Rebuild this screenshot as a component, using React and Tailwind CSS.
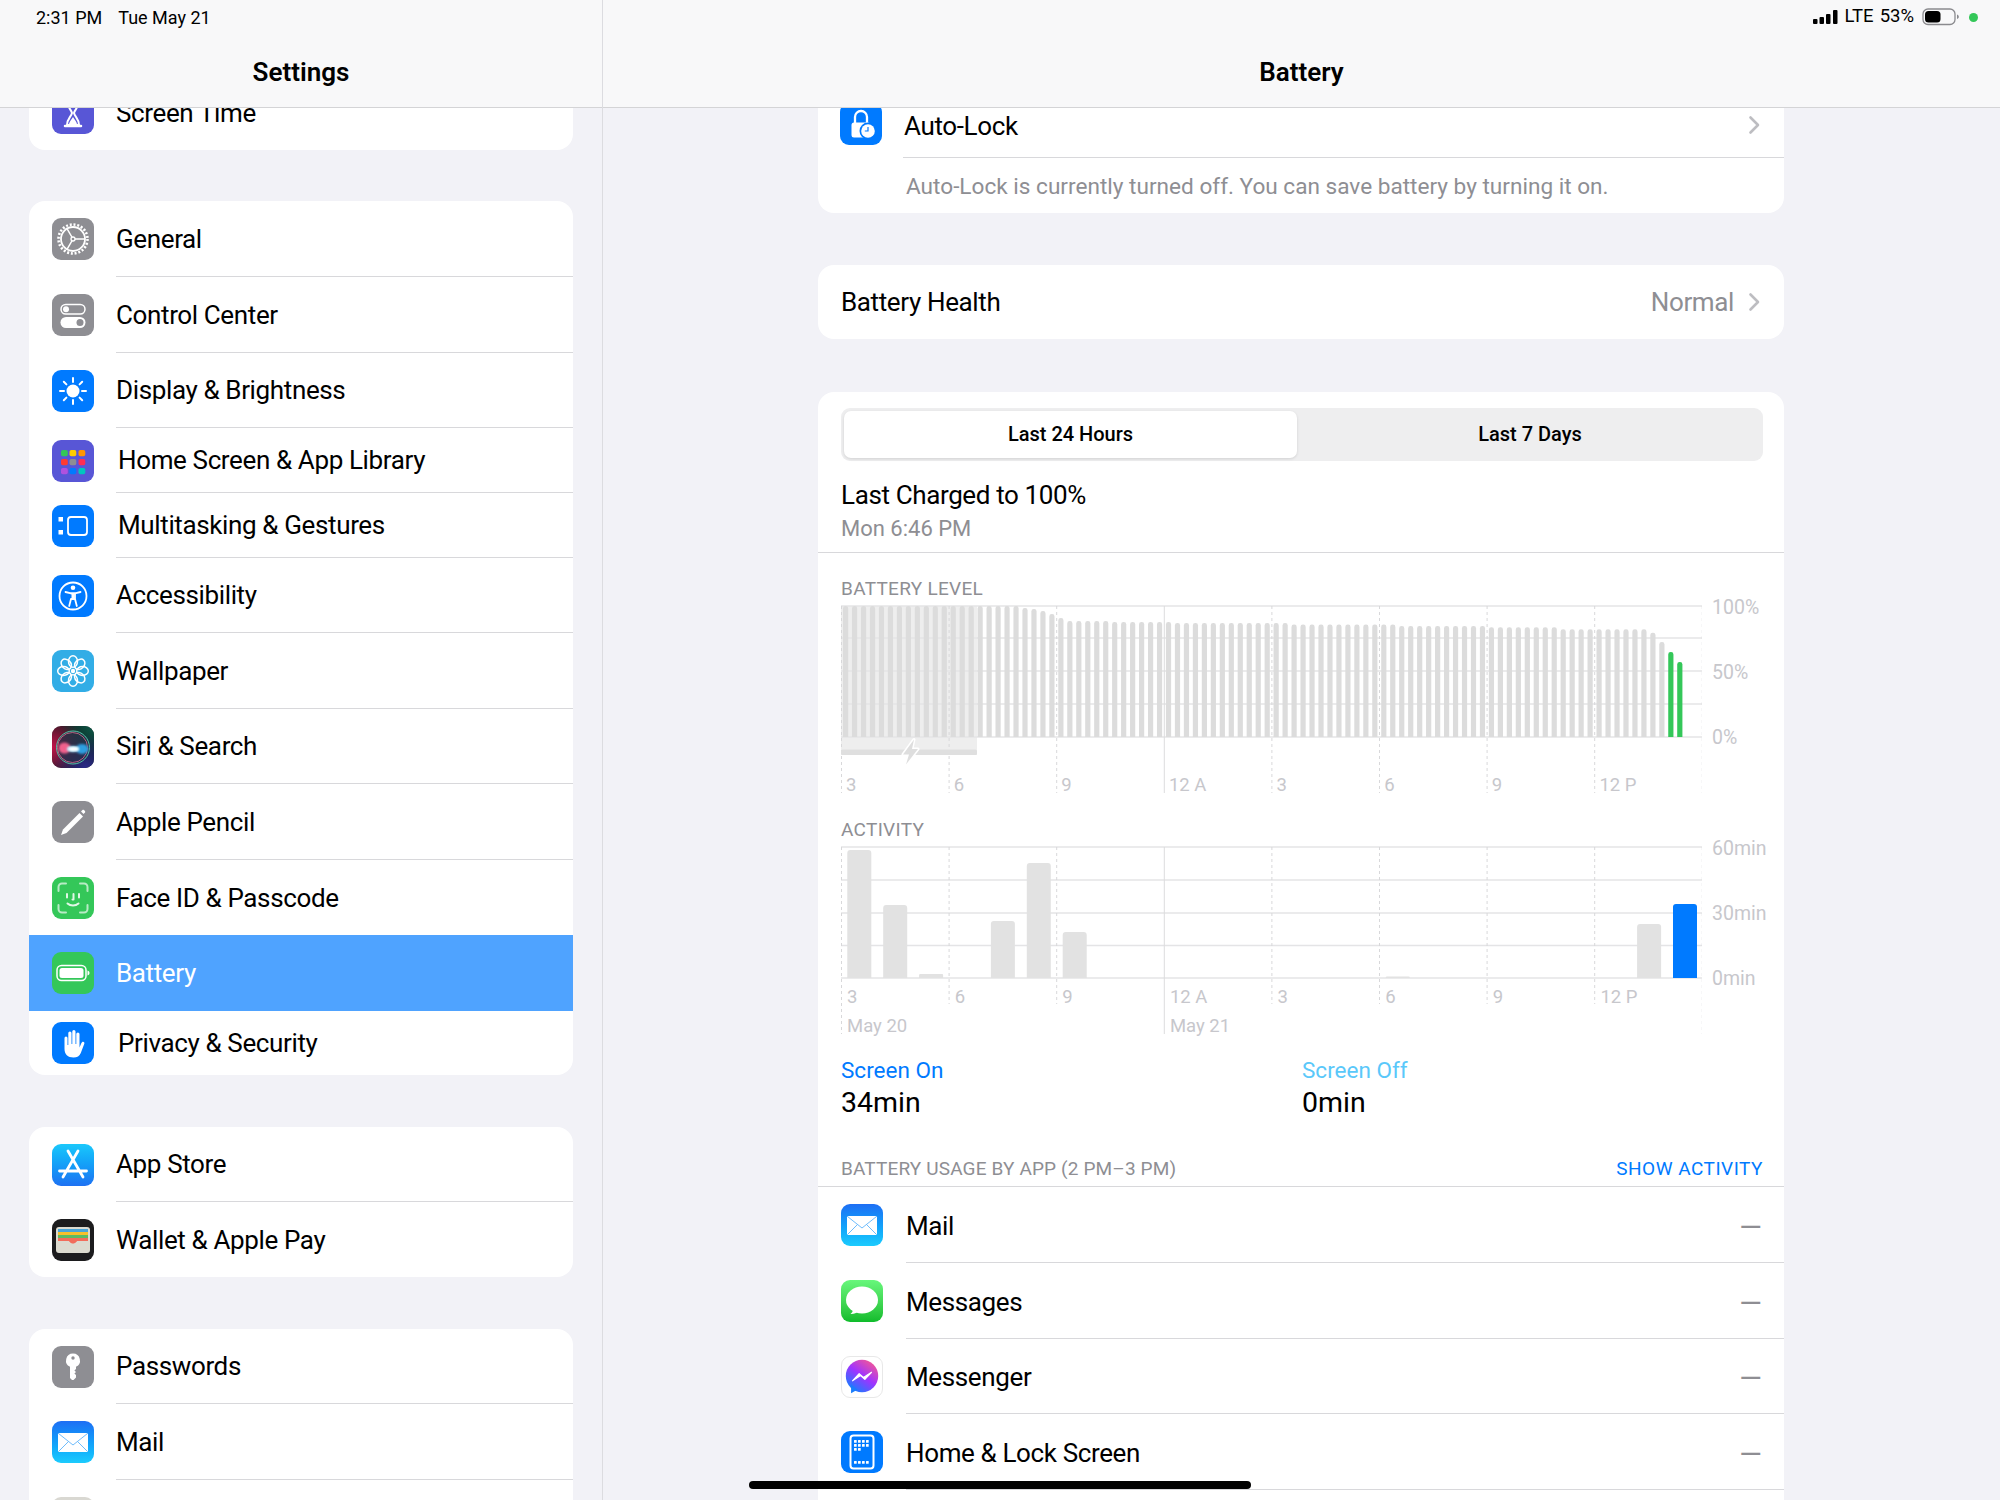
import React from 'react';

const Tile = ({ bg, children }) => (
  <div className={`w-[42px] h-[42px] shrink-0 rounded-[9px] overflow-hidden ${bg}`}>
    <svg viewBox="0 0 42 42" className="w-full h-full block">{children}</svg>
  </div>
);

const Hourglass = () => (
  <Tile bg="bg-[#5856d6]">
    <path d="M13 8h16M13 34h16" stroke="#fff" strokeWidth="2.5" strokeLinecap="round" />
    <path d="M15 9c0 6 4 8 5 12-1 4-5 6-5 12h12c0-6-4-8-5-12 1-4 5-6 5-12z" fill="none" stroke="#fff" strokeWidth="2" />
    <path d="M17 32c.5-3 3-5 4-7 1 2 3.500 4 4 7z" fill="#fff" />
  </Tile>
);

const Gear = () => (
  <Tile bg="bg-[#8e8e93]">
    <circle cx="21" cy="21" r="14.500" fill="none" stroke="#fff" strokeWidth="2.600" strokeDasharray="2 1.800" />
    <circle cx="21" cy="21" r="12" fill="none" stroke="#fff" strokeWidth="1.800" />
    <path d="M21 21H33M21 21L15 10.600M21 21L15 31.400" stroke="#fff" strokeWidth="1.500" />
    <circle cx="21" cy="21" r="2" fill="#8e8e93" stroke="#fff" strokeWidth="1.300" />
  </Tile>
);

const Toggles = () => (
  <Tile bg="bg-[#8e8e93]">
    <rect x="9" y="10.500" width="24" height="9.500" rx="4.750" fill="none" stroke="#fff" strokeWidth="1.500" />
    <circle cx="14" cy="15.250" r="3" fill="#fff" />
    <rect x="8.500" y="23" width="25" height="11" rx="5.500" fill="#fff" />
    <circle cx="28" cy="28.500" r="3.500" fill="#8e8e93" />
  </Tile>
);

const Sun = () => (
  <Tile bg="bg-[#007aff]">
    <circle cx="21" cy="21" r="6.500" fill="#fff" />
    <path
      d="M21 8v4M21 30v4M8 21h4M30 21h4M11.800 11.800l2.600 2.600M27.600 27.600l2.600 2.600M30.200 11.800l-2.600 2.600M14.400 27.600l-2.600 2.600"
      stroke="#fff"
      strokeWidth="2"
      strokeLinecap="round"
    />
  </Tile>
);

const AppGrid = () => {
  const cells = [
    [9, 10, '#34c759'], [17.500, 10, '#ffcc00'], [26.500, 10, '#ff9500'],
    [9, 19, '#ff3b30'], [17.500, 19, '#8e8e93'], [26.500, 19, '#ff2d55'],
    [9, 28, '#af52de'], [17.500, 28, '#007aff'], [26.500, 28, '#00c7be'],
  ];
  return (
    <Tile bg="bg-[#5856d6]">
      {cells.map(([x, y, c]) => <rect key={`${x}-${y}`} x={x} y={y} width="6.800" height="6.300" rx="1.800" fill={c} />)}
    </Tile>
  );
};

const Multitask = () => (
  <Tile bg="bg-[#007aff]">
    <rect x="6.500" y="12" width="4.500" height="4.500" fill="#fff" />
    <rect x="6.500" y="25" width="4.500" height="4.500" fill="#fff" />
    <rect x="16" y="12" width="19" height="18" rx="3" fill="none" stroke="#fff" strokeWidth="1.800" />
  </Tile>
);

const Access = () => (
  <Tile bg="bg-[#007aff]">
    <circle cx="21" cy="21" r="13.500" fill="none" stroke="#fff" strokeWidth="1.800" />
    <circle cx="21" cy="12.800" r="2.300" fill="#fff" />
    <path d="M13.500 17l5.500 1.300h4l5.500-1.300" fill="none" stroke="#fff" strokeWidth="1.800" strokeLinecap="round" />
    <path d="M19 18.300h4v5.700l1.800 7M23 24h-4l-1.800 7" fill="none" stroke="#fff" strokeWidth="1.800" strokeLinecap="round" strokeLinejoin="round" />
    <path d="M19.500 18.500h3v5.500h-3z" fill="#fff" />
  </Tile>
);

const Flower = () => (
  <Tile bg="bg-[#32ade6]">
    {[0, 45, 90, 135, 180, 225, 270, 315].map((a) => (
      <ellipse key={a} cx="21" cy="11.500" rx="4.500" ry="5.800" fill="none" stroke="#fff" strokeWidth="1.500" transform={`rotate(${a} 21 21)`} />
    ))}
    <circle cx="21" cy="21" r="2.200" fill="#fff" />
  </Tile>
);

const Siri = () => (
  <Tile bg="bg-[#0f1a1c]">
    <defs>
      <radialGradient id="siriCorner" cx="0" cy="0.500" r="0.800">
        <stop offset="0" stopColor="#c2134a" />
        <stop offset="1" stopColor="#c2134a" stopOpacity="0" />
      </radialGradient>
      <radialGradient id="siriCorner2" cx="1" cy="0" r="0.800">
        <stop offset="0" stopColor="#0c5a48" />
        <stop offset="1" stopColor="#0c5a48" stopOpacity="0" />
      </radialGradient>
      <radialGradient id="siriCorner3" cx="0.800" cy="1" r="0.800">
        <stop offset="0" stopColor="#2b2a8a" />
        <stop offset="1" stopColor="#2b2a8a" stopOpacity="0" />
      </radialGradient>
      <filter id="siriBlur"><feGaussianBlur stdDeviation="1.300" /></filter>
    </defs>
    <rect width="42" height="42" fill="url(#siriCorner)" />
    <rect width="42" height="42" fill="url(#siriCorner2)" />
    <rect width="42" height="42" fill="url(#siriCorner3)" />
    <circle cx="21" cy="21.500" r="16.500" fill="#27324a" fillOpacity="0.700" stroke="#57c4a8" strokeWidth="1" />
    <circle cx="20.500" cy="21.500" r="15" fill="none" stroke="#d86a8c" strokeWidth="1" opacity="0.800" />
    <g filter="url(#siriBlur)">
      <ellipse cx="12.500" cy="22" rx="6" ry="5.500" fill="#f0608c" />
      <ellipse cx="30" cy="23" rx="6.500" ry="5" fill="#2f9fe0" />
      <ellipse cx="21" cy="23" rx="6" ry="3" fill="#9fe6ff" />
    </g>
    <ellipse cx="21.500" cy="23" rx="5" ry="2.300" fill="#ffffff" filter="url(#siriBlur)" />
  </Tile>
);

const Pencil = () => (
  <Tile bg="bg-[#8e8e93]">
    <path d="M9 34l2-5.500L27.500 12l3.500 3.500L14.500 32z" fill="#fff" />
    <path d="M29 10.500l1.500-1.500c1-1 3.500 1.500 2.500 2.500L31.500 13z" fill="#fff" />
  </Tile>
);

const FaceId = () => (
  <Tile bg="bg-[#34c759]">
    <path d="M6.500 14v-4a3.500 3.500 0 0 1 3.500-3.500h4M28 6.500h4a3.500 3.500 0 0 1 3.500 3.500v4M35.500 28v4a3.500 3.500 0 0 1-3.500 3.500h-4M14 35.500h-4a3.500 3.500 0 0 1-3.500-3.500v-4" fill="none" stroke="#fff" strokeOpacity="0.65" strokeWidth="2" strokeLinecap="round" />
    <path d="M15 17v3.500M27 17v3.500M21.500 17v5.500h-1M15.500 26.500c3 2.700 8 2.700 11 0" fill="none" stroke="#fff" strokeOpacity="0.85" strokeWidth="2" strokeLinecap="round" strokeLinejoin="round" />
  </Tile>
);

const BatteryIcon = () => (
  <Tile bg="bg-[#34c759]">
    <rect x="5" y="13.500" width="29" height="15" rx="4.500" fill="none" stroke="#fff" strokeWidth="1.500" />
    <rect x="7.500" y="16" width="24" height="10" rx="2.500" fill="#fff" />
    <path d="M35.500 18.500c1.500.5 2 1.500 2 2.500s-.5 2-2 2.500z" fill="#fff" />
  </Tile>
);

const Hand = () => (
  <Tile bg="bg-[#007aff]">
    <path
      fill="#fff"
      d="M12.500 16a1.500 1.500 0 0 1 3 0v7h.8V11a1.600 1.600 0 0 1 3.200 0v11h.8V9.500a1.600 1.600 0 0 1 3.200 0V22h.8V12a1.600 1.600 0 0 1 3.200 0v13.500l1.800-4.200c.5-1.200 1.300-1.800 2.300-1.400.8.300 1 1.200.6 2.200L28.800 31c-1.300 3-3.600 4.500-7.300 4.500-5.700 0-9-3.500-9-8.500z"
    />
  </Tile>
);

const AppStoreIcon = () => (
  <Tile bg="bg-linear-to-b from-[#1bc8fb] to-[#1e71f2]">
    <path d="M16 7l15 26M26 7L11 33M7.500 27h27" stroke="#fff" strokeWidth="2.800" strokeLinecap="round" />
  </Tile>
);

const Wallet = () => (
  <Tile bg="bg-[#1c1c1e]">
    <rect x="4" y="8" width="34" height="26" rx="3" fill="#dcdbd0" />
    <rect x="6" y="10" width="30" height="3" fill="#4aa5d8" />
    <rect x="6" y="13" width="30" height="3" fill="#f7c02c" />
    <rect x="6" y="16" width="30" height="3" fill="#5dbb63" />
    <path d="M6 19h30v3H25.500c-1 0-1.500 2.500-4.500 2.500S17.500 22 16.500 22H6z" fill="#f26d5b" />
  </Tile>
);

const Key = () => (
  <Tile bg="bg-[#8e8e93]">
    <path d="M21 7.500a7 7 0 0 1 3 13.300V23l-1.600 1.500L24 26l-1.600 1.500L24 29v2.500L21.500 34h-1.500L18 32V20.800a7 7 0 0 1 3-13.300z" fill="#fff" />
    <circle cx="21" cy="12" r="1.700" fill="#8e8e93" />
  </Tile>
);

const Envelope = () => (
  <Tile bg="bg-linear-to-b from-[#1e6ef4] to-[#1ccbfd]">
    <rect x="6" y="12" width="30" height="19" rx="1.500" fill="#fff" />
    <path d="M6.500 12.500L21 24l14.500-11.500M6.500 30.500l10-10M35.500 30.500l-10-10" fill="none" stroke="#5fb4fb" strokeWidth="0.900" />
  </Tile>
);

const Lock = () => (
  <Tile bg="bg-[#007aff]">
    <path d="M15 20v-6a6 6 0 0 1 12 0v6" fill="none" stroke="#fff" strokeWidth="2.300" />
    <rect x="11.500" y="19.500" width="19" height="15" rx="2.500" fill="#fff" />
    <circle cx="28" cy="28" r="8.500" fill="#007aff" />
    <circle cx="28" cy="28" r="6.800" fill="#fff" />
    <path d="M28 24v4h-3.200" fill="none" stroke="#007aff" strokeWidth="1.200" />
  </Tile>
);

const Bubble = () => (
  <Tile bg="bg-linear-to-b from-[#67f77b] to-[#0dbc2b]">
    <ellipse cx="21" cy="20" rx="16" ry="13.500" fill="#fff" />
    <path d="M12 29c0 2-1 4-2.500 5 3 .3 6-.8 8-3z" fill="#fff" />
  </Tile>
);

const Messenger = () => (
  <Tile bg="bg-white border border-[#e8e8e8]">
    <defs>
      <linearGradient id="msgGrad" x1="0.200" y1="1" x2="0.900" y2="0">
        <stop offset="0" stopColor="#0a84ff" />
        <stop offset="0.500" stopColor="#a033ff" />
        <stop offset="1" stopColor="#ff5c87" />
      </linearGradient>
    </defs>
    <circle cx="21" cy="20" r="17" fill="url(#msgGrad)" />
    <path d="M9.500 29v9l6.500-3.500z" fill="#1a7dfb" />
    <path d="M11 25l7-7.500 4.500 4 8.500-5.500-7 7.500-4.500-4z" fill="#fff" stroke="#fff" strokeWidth="1.200" strokeLinejoin="round" />
  </Tile>
);

const HomeLock = () => {
  const dots = [
    [14, 10], [18, 10], [22, 10], [26, 10],
    [14, 14], [18, 14], [22, 14], [26, 14],
    [14, 18], [18, 18],
    [14, 31], [18, 31], [22, 31], [26, 31],
  ];
  return (
    <Tile bg="bg-[#007aff]">
      <rect x="9.500" y="4.500" width="23" height="33" rx="3" fill="none" stroke="#fff" strokeWidth="2" />
      {dots.map(([x, y]) => <rect key={`${x}-${y}`} x={x - 1} y={y - 1} width="2.700" height="2.700" rx="0.500" fill="#fff" />)}
    </Tile>
  );
};

const Chevron = () => (
  <svg width="12" height="20" viewBox="0 0 12 20" className="shrink-0">
    <path d="M2.500 2.500l7.500 7.500-7.500 7.500" fill="none" stroke="#bdbdc1" strokeWidth="2.600" strokeLinecap="round" strokeLinejoin="round" />
  </svg>
);

// sidebar rows, heights read off the reference
const groups = [
  [{ icon: <Hourglass />, label: 'Screen Time', h: 'h-[75px]', last: true }],
  [
    { icon: <Gear />, label: 'General', h: 'h-[76px]' },
    { icon: <Toggles />, label: 'Control Center', h: 'h-[76px]' },
    { icon: <Sun />, label: 'Display & Brightness', h: 'h-[75px]' },
    { icon: <AppGrid />, label: 'Home Screen & App Library', h: 'h-[65px]', shift: true },
    { icon: <Multitask />, label: 'Multitasking & Gestures', h: 'h-[65px]', shift: true },
    { icon: <Access />, label: 'Accessibility', h: 'h-[75px]' },
    { icon: <Flower />, label: 'Wallpaper', h: 'h-[76px]' },
    { icon: <Siri />, label: 'Siri & Search', h: 'h-[75px]' },
    { icon: <Pencil />, label: 'Apple Pencil', h: 'h-[76px]' },
    { icon: <FaceId />, label: 'Face ID & Passcode', h: 'h-[75px]', last: true },
    { icon: <BatteryIcon />, label: 'Battery', h: 'h-[76px]', active: true, last: true },
    { icon: <Hand />, label: 'Privacy & Security', h: 'h-[64px]', shift: true, last: true },
  ],
  [
    { icon: <AppStoreIcon />, label: 'App Store', h: 'h-[75px]' },
    { icon: <Wallet />, label: 'Wallet & Apple Pay', h: 'h-[75px]', last: true },
  ],
  [
    { icon: <Key />, label: 'Passwords', h: 'h-[75px]' },
    { icon: <Envelope />, label: 'Mail', h: 'h-[76px]' },
    { icon: <Tile bg="bg-[#d9d8d2]" />, label: '', h: 'h-[75px]', last: true },
  ],
];

function SidebarRow({ row }) {
  return (
    <div className={`flex items-center pl-[23px] ${row.h} ${row.active ? 'bg-[#4fa3ff] text-white' : 'text-black'}`}>
      {row.icon}
      <div className={`flex-1 h-full flex items-center ml-[22px] ${row.last ? '' : 'border-b border-[#d8d8db]'}`}>
        <span className={`text-[26px] tracking-[-0.37px] pt-[1px] ${row.shift ? 'pl-[2px]' : ''}`}>{row.label}</span>
      </div>
    </div>
  );
}

function Sidebar() {
  return (
    <div className="relative w-[603px] h-full shrink-0 overflow-hidden border-r border-[#dcdce0]">
      <div className="pt-[75px] px-[29px] flex flex-col">
        {groups.map((rows, i) => (
          <div key={i} className={`bg-white rounded-[16px] overflow-hidden ${i === 0 ? 'mb-[51px]' : 'mb-[52px]'}`}>
            {rows.map((row) => <SidebarRow key={row.h + row.label} row={row} />)}
          </div>
        ))}
      </div>
      <div className="absolute top-0 inset-x-0 h-[108px] bg-[#f8f8f9] border-b border-[#d4d4d6]">
        <div className="flex gap-[16px] pl-[36px] text-[18px] h-[34px] items-center text-black">
          <span>2:31 PM</span>
          <span>Tue May 21</span>
        </div>
        <div className="text-center text-[26px] leading-[36px] font-semibold mt-[20px] text-black">Settings</div>
      </div>
    </div>
  );
}

const ticks = ['3', '6', '9', '12 A', '3', '6', '9', '12 P'];
const tickX = (k) => 0.5 + k * 107.6;

const levelTops = [
  ...Array(20).fill(606), 608, 609, 611, 614, 618,
  ...Array(5).fill(621), ...Array(7).fill(622), ...Array(13).fill(623),
  ...Array(12).fill(624.5), ...Array(10).fill(626), ...Array(8).fill(627.3),
  ...Array(10).fill(629.3), 632.7, 642, 652, 662,
];

const topRounded = (x, y, w, h, r) =>
  `M${x} ${y + h}V${y + r}a${r} ${r} 0 0 1 ${r} ${-r}h${w - 2 * r}a${r} ${r} 0 0 1 ${r} ${r}V${y + h}z`;

function GridLines({ ys, short }) {
  return (
    <>
      {ys.map((y) => <path key={y} d={`M0 ${y}H861`} stroke="#e4e4e6" strokeWidth="1.500" />)}
      {Array.from({ length: 9 }, (_, k) => (
        <path
          key={k}
          d={`M${tickX(k)} 1V${short && k !== 0 && k !== 3 && k !== 8 ? 158 : 188}`}
          stroke={k === 3 ? '#dcdcde' : '#d8d8da'}
          strokeWidth="1"
          strokeDasharray={k === 3 ? undefined : '3 3'}
        />
      ))}
    </>
  );
}

function LevelChart() {
  return (
    <div className="relative w-[861px] h-[188px]">
      <svg width="861" height="188" className="block">
        <rect x="0" y="1" width="136" height="149" fill="#eeeeee" />
        <GridLines ys={[1, 33, 66, 99, 132]} />
        <rect x="0" y="144.500" width="136" height="5.500" rx="1.500" fill="#dfdfdf" />
        {levelTops.map((t, i) => (
          <path
            key={i}
            d={topRounded(2 + i * 8.97, t - 605, 5.200, 737 - t, 2.400)}
            fill={i >= 92 ? '#34c759' : '#dcdcdc'}
          />
        ))}
        <path d="M73 134.500l-11 15h6l-3 10 12-15.500h-6z" fill="#dedede" stroke="#fff" strokeWidth="3" strokeLinejoin="round" paintOrder="stroke" />
      </svg>
      <div className="absolute inset-x-0 top-[170px] grid grid-cols-8 text-[18.500px] leading-[20px] text-[#c7c7cc]">
        {ticks.map((t, i) => <span key={i} className="pl-[5px]">{t}</span>)}
      </div>
    </div>
  );
}

const activity = [
  [0, 850], [1, 905], [2, 974], [4, 921], [5, 863], [6, 932], [15, 976.5], [22, 924], [23, 904],
];

function ActivityChart() {
  return (
    <div className="relative w-[861px] h-[188px]">
      <svg width="861" height="188" className="block">
        <GridLines ys={[1, 34, 67, 99.5, 132]} short />
        {activity.map(([i, t]) => (
          <path
            key={i}
            d={topRounded(6.300 + i * 35.9, t - 846, 24, 978 - t, t > 970 ? 1 : 3)}
            fill={i === 23 ? '#007aff' : '#e2e2e2'}
          />
        ))}
      </svg>
      <div className="absolute inset-x-0 top-[141px] grid grid-cols-8 text-[18.500px] leading-[20px] text-[#c7c7cc]">
        {ticks.map((t, i) => <span key={i} className="pl-[6px]">{t}</span>)}
      </div>
      <div className="absolute inset-x-0 top-[170px] grid grid-cols-8 text-[18.500px] leading-[20px] text-[#c7c7cc]">
        <span className="col-span-3 pl-[6px]">May 20</span>
        <span className="col-span-5 pl-[6px]">May 21</span>
      </div>
    </div>
  );
}

function AxisLabels({ labels }) {
  return (
    <div className="ml-[10px] -mt-[7px] h-[150px] flex flex-col justify-between text-[19.500px] leading-[20px] text-[#c7c7cc]">
      {labels.map((l) => <span key={l}>{l}</span>)}
    </div>
  );
}

const apps = [
  { icon: <Envelope />, label: 'Mail', h: 'h-[76px]' },
  { icon: <Bubble />, label: 'Messages', h: 'h-[76px]' },
  { icon: <Messenger />, label: 'Messenger', h: 'h-[75px]' },
  { icon: <HomeLock />, label: 'Home & Lock Screen', h: 'h-[76px]' },
];

function BatteryPanel() {
  return (
    <div className="relative flex-1 h-full overflow-hidden">
      <div className="pt-[89px] pl-[215px] pr-[216px] flex flex-col text-black">
        <div className="bg-white rounded-[16px]">
          <div className="flex items-center h-[69px] pl-[22px]">
            <Lock />
            <div className="flex-1 h-full ml-[21px] pr-[24px] flex items-center justify-between border-b border-[#d8d8db]">
              <span className="text-[26px] tracking-[-0.37px] pt-[6px] pl-[1px]">Auto-Lock</span>
              <span className="pt-[3px]"><Chevron /></span>
            </div>
          </div>
          <div className="h-[55px] pl-[88px] pt-[2px] flex items-center text-[22.600px] text-[#8e8e93]">
            Auto-Lock is currently turned off. You can save battery by turning it on.
          </div>
        </div>

        <div className="bg-white rounded-[16px] mt-[52px] h-[74px] pl-[23px] pr-[24px] flex items-center justify-between tracking-[-0.37px]">
          <span className="text-[26px] pt-[1px]">Battery Health</span>
          <div className="flex items-center gap-[14px]">
            <span className="text-[26px] pt-[1px] text-[#8e8e93]">Normal</span>
            <Chevron />
          </div>
        </div>

        <div className="bg-white rounded-t-[16px] mt-[53px] pt-[16px] pb-[30px]">
          <div className="ml-[23px] mr-[21px] h-[53px] p-[3px] rounded-[9px] bg-[#eeeeef] flex text-[20px] font-medium">
            <div className="w-[453px] pb-[1px] rounded-[7px] bg-white shadow-[0_1px_3px_rgba(0,0,0,0.12)] flex items-center justify-center">Last 24 Hours</div>
            <div className="flex-1 pl-[3px] pb-[1px] flex items-center justify-center">Last 7 Days</div>
          </div>

          <div className="h-[92px] pl-[23px] pt-[17px] border-b border-[#d8d8db]">
            <div className="text-[26px] tracking-[-0.37px] leading-[34px]">Last Charged to 100%</div>
            <div className="text-[22px] leading-[34px] text-[#8e8e93]">Mon 6:46 PM</div>
          </div>

          <div className="pl-[23px]">
            <div className="mt-[26px] mb-[6px] text-[19px] tracking-[0.3px] leading-[20px] text-[#8e8e93]">BATTERY LEVEL</div>
            <div className="flex">
              <LevelChart />
              <AxisLabels labels={['100%', '50%', '0%']} />
            </div>

            <div className="mt-[27px] mb-[6px] text-[19px] tracking-[0.3px] leading-[20px] text-[#8e8e93]">ACTIVITY</div>
            <div className="flex">
              <ActivityChart />
              <AxisLabels labels={['60min', '30min', '0min']} />
            </div>

            <div className="mt-[21px] flex">
              <div className="w-[461px]">
                <div className="text-[22.500px] leading-[30px] text-[#007aff]">Screen On</div>
                <div className="text-[28.500px] leading-[36px]">34min</div>
              </div>
              <div>
                <div className="text-[22.500px] leading-[30px] text-[#5ac8fa]">Screen Off</div>
                <div className="text-[28.500px] leading-[36px]">0min</div>
              </div>
            </div>
          </div>

          <div className="mt-[38px] pl-[23px] pr-[21px] pb-[7px] flex justify-between text-[19px] tracking-[0.15px] leading-[20px] border-b border-[#d8d8db]">
            <span className="text-[#8e8e93]">BATTERY USAGE BY APP (2 PM–3 PM)</span>
            <span className="text-[#007aff] tracking-[0.5px]">SHOW ACTIVITY</span>
          </div>

          {apps.map((a) => (
            <div key={a.label} className={`flex items-center pl-[23px] ${a.h}`}>
              {a.icon}
              <div className="flex-1 h-full ml-[23px] pr-[22px] flex items-center justify-between border-b border-[#d8d8db]">
                <span className="text-[26px] tracking-[-0.37px] pt-[3px]">{a.label}</span>
                <span className="text-[29px] pt-[6px] text-[#8e8e93]">—</span>
              </div>
            </div>
          ))}
        </div>
      </div>

      <div className="absolute top-0 inset-x-0 h-[108px] bg-[#f8f8f9] border-b border-[#d4d4d6] text-black">
        <div className="flex justify-end items-center h-[34px] pr-[22px] text-[18.500px]">
          <svg width="25" height="14" viewBox="0 0 25 14" className="mr-[7px]">
            <rect x="0" y="9" width="4.500" height="5" rx="1" />
            <rect x="6.500" y="7" width="4.500" height="7" rx="1" />
            <rect x="13" y="4" width="4.500" height="10" rx="1" />
            <rect x="20" y="0" width="4.500" height="14" rx="1" />
          </svg>
          <span>LTE</span>
          <span className="ml-[6px]">53%</span>
          <svg width="38" height="18" viewBox="0 0 38 18" className="ml-[8px]">
            <rect x="1" y="1" width="32" height="15.500" rx="5" fill="none" stroke="#8a8a8e" strokeWidth="1.300" />
            <rect x="3" y="3" width="15.500" height="11.500" rx="3.500" fill="#000" />
            <path d="M35 6.500c1.500.5 1.800 1.500 1.800 2.300s-.3 1.800-1.800 2.300z" fill="#8a8a8e" />
          </svg>
          <span className="ml-[9px] w-[9px] h-[9px] rounded-full bg-[#34c759]" />
        </div>
        <div className="text-center text-[26px] leading-[36px] font-semibold mt-[20px]">Battery</div>
      </div>

      <div className="absolute bottom-[11px] left-[146px] w-[502px] h-[8px] rounded-full bg-black" />
    </div>
  );
}

export default function App() {
  return (
    <div className="flex w-[2000px] h-[1500px] overflow-hidden bg-[#f2f2f7] font-['Roboto',sans-serif]">
      <Sidebar />
      <BatteryPanel />
    </div>
  );
}
